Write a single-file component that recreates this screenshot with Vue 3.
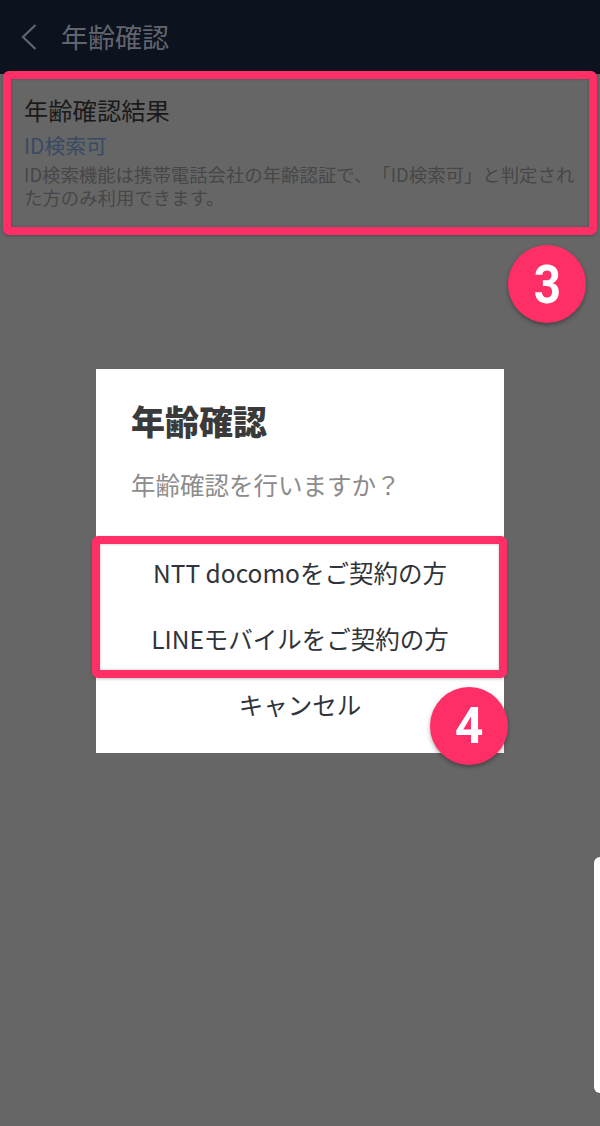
<script setup>
const buttons = ['NTT docomoをご契約の方', 'LINEモバイルをご契約の方']
</script>

<template>
  <div class="page">
    <header class="topbar">
      <svg class="back" width="16" height="26" viewBox="0 0 16 26" fill="none" aria-hidden="true">
        <path d="M14.5 1 L2 13 L14.5 25" stroke="#62656c" stroke-width="2.2" />
      </svg>
      <h1 class="topbar-title">年齢確認</h1>
    </header>

    <section class="result">
      <h2 class="result-title">年齢確認結果</h2>
      <p class="result-status">ID検索可</p>
      <p class="result-note">ID検索機能は携帯電話会社の年齢認証で、「ID検索可」と判定された方のみ利用できます。</p>
      <span class="mark mark-result"></span>
      <span class="badge badge-three"><span class="digit-narrow">3</span></span>
    </section>

    <div class="dialog">
      <h2 class="dialog-title">年齢確認</h2>
      <p class="dialog-text">年齢確認を行いますか？</p>
      <div class="dialog-actions">
        <span class="mark mark-actions"></span>
        <button v-for="label in buttons" :key="label" class="action" type="button">{{ label }}</button>
        <button class="action" type="button">キャンセル</button>
      </div>
      <span class="badge badge-four">4</span>
    </div>

    <div class="edge-panel"></div>
  </div>
</template>

<style scoped>
.page {
  position: relative;
  height: 1126px;
  overflow: hidden;
  background: #666666;
  font-family: "Noto Sans CJK JP", "Noto Sans", sans-serif;
  text-spacing-trim: space-all;
}
.topbar {
  height: 74px;
  box-sizing: border-box;
  display: flex;
  align-items: center;
  padding: 0 0 0 21px;
  background: #0d121f;
}
.back {
  margin-right: 24px;
}
.topbar-title {
  margin: 0;
  font-size: 27px;
  line-height: 74px;
  font-weight: 400;
  color: #62656c;
}
.result {
  position: relative;
  height: 156px;
  box-sizing: border-box;
  padding: 20px 18px 0 24px;
}
.result-title {
  margin: 0;
  font-size: 24.3px;
  line-height: 32px;
  font-weight: 400;
  color: #1a1a1a;
}
.result-status {
  margin: 4px 0 0;
  font-size: 20.8px;
  line-height: 30px;
  color: #384a64;
}
.result-note {
  margin: 3px 0 0;
  font-size: 18.4px;
  line-height: 23px;
  color: #474747;
}
.mark {
  position: absolute;
  box-sizing: border-box;
  border: 8px solid #fe2e66;
  border-radius: 6px;
  box-shadow: 0 1px 3px rgba(0, 0, 0, 0.25), inset 0 0 3px rgba(0, 0, 0, 0.25);
  pointer-events: none;
}
.mark-result {
  left: 3px;
  right: 3px;
  top: -3px;
  height: 164px;
}
.badge {
  position: absolute;
  width: 78px;
  height: 78px;
  border-radius: 50%;
  display: flex;
  align-items: center;
  justify-content: center;
  background: #fe2e66;
  color: #fff;
  font-family: Roboto, sans-serif;
  font-weight: 700;
  box-shadow: 0 2px 4px rgba(0, 0, 0, 0.35);
}
.badge-three {
  left: 508px;
  top: 171px;
  font-size: 54px;
}
.digit-narrow {
  display: inline-block;
  transform: scaleX(0.88);
}
.dialog {
  position: relative;
  width: 408px;
  height: 384px;
  box-sizing: border-box;
  margin: 139px auto 0;
  padding: 30px 0 0;
  background: #fff;
}
.dialog-title {
  margin: 0;
  padding-left: 35px;
  font-size: 34px;
  line-height: 44px;
  font-weight: 900;
  color: #3a3a3a;
}
.dialog-text {
  margin: 24px 0 0;
  padding-left: 35px;
  font-size: 24.5px;
  line-height: 36px;
  color: #8c8c8c;
}
.dialog-actions {
  position: relative;
  margin-top: 37px;
  display: flex;
  flex-direction: column;
}
.action {
  height: 66px;
  padding: 0;
  border: 0;
  background: none;
  font-family: inherit;
  font-size: 24.5px;
  line-height: 66px;
  color: #30343a;
  text-align: center;
}
.mark-actions {
  left: -4px;
  right: -3px;
  top: -4px;
  height: 142px;
}
.badge-four {
  left: 334px;
  top: 318px;
  font-size: 50px;
}
.edge-panel {
  position: absolute;
  right: 0;
  top: 857px;
  width: 6px;
  height: 236px;
  background: #fff;
  border-radius: 6px 0 0 6px;
}
</style>
